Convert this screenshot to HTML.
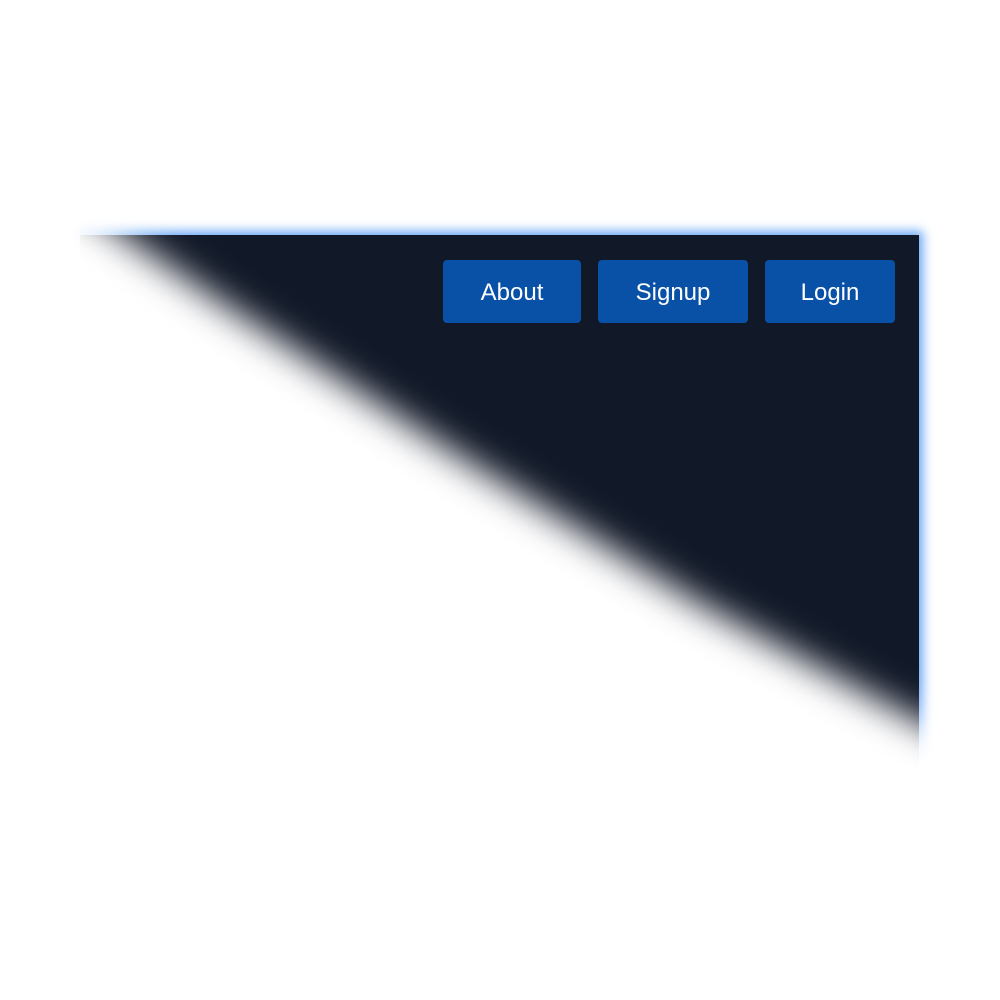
<!DOCTYPE html>
<html><head><style>
html,body{margin:0;padding:0;background:#fff;width:1000px;height:1000px;overflow:hidden;position:relative}
.panel{position:absolute;left:80px;top:235px;width:839px;height:535px;background:#111827;box-shadow:0 0 10px 4px #6aa8f5}
.btn{position:absolute;top:260px;height:63px;background:#0851a6;border-radius:4px;color:#fff;font:24px "Liberation Sans",sans-serif;display:flex;align-items:center;justify-content:center;padding-top:2px;box-sizing:border-box}
svg{position:absolute;left:0;top:0;display:block}
</style></head><body>
<div class="panel"></div>
<div class="btn" style="left:443px;width:138px">About</div>
<div class="btn" style="left:598px;width:150px">Signup</div>
<div class="btn" style="left:765px;width:130px">Login</div>
<svg width="1000" height="1000">
<defs><filter id="b" x="-20%" y="-20%" width="140%" height="140%"><feGaussianBlur stdDeviation="18"/></filter>
<filter id="b2" x="-20%" y="-20%" width="140%" height="140%"><feGaussianBlur stdDeviation="8"/></filter></defs>
<path d="M-100,100 L60,190 L130,240 L225,305 L457,455 L702,605 L920,722 L1000,760 L1100,780 L1100,1100 L-100,1100 Z" fill="#fff" filter="url(#b)"/>
<rect x="-50" y="775" width="1100" height="300" fill="#fff" filter="url(#b2)"/>
</svg>
</body></html>
